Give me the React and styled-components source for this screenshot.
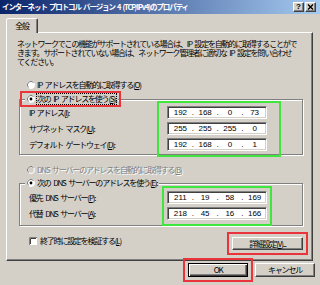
import React from 'react'
import styled, { createGlobalStyle } from 'styled-components'

const FACE = '#d4d0c8'
const RED = '#e8343a'
const GREEN = '#3ee63e'

const GlobalStyle = createGlobalStyle`
  html, body { margin: 0; padding: 0; background: ${FACE}; }
`

const Dialog = styled.div`
  width: 320px;
  height: 285px;
  overflow: hidden;
  background: ${FACE};
  display: flex;
  flex-direction: column;
  font-family: "Noto Sans CJK JP", "Noto Sans", sans-serif;
  font-size: 8px;
  line-height: 10px;
  letter-spacing: -1.2px;
  word-spacing: 2px;
  color: #000;
`

const TitleBar = styled.div`
  flex: none;
  height: 14px;
  display: flex;
  align-items: center;
  padding: 0 4px 0 2px;
  background: linear-gradient(to right, #0a246a, #a6caf0);
`

const Title = styled.div`
  flex: 1;
  color: #fff;
  font-weight: bold;
  font-size: 7.5px;
  letter-spacing: -1.1px;
  word-spacing: 1.5px;
  white-space: nowrap;
`

const CaptionButtons = styled.div`
  display: flex;
  gap: 1px;
`

const CaptionButton = styled.div`
  width: 11px;
  height: 10px;
  box-sizing: border-box;
  background: ${FACE};
  border: 1px solid;
  border-color: #fff #404040 #404040 #fff;
  box-shadow: inset -1px -1px 0 #808080;
  display: flex;
  align-items: center;
  justify-content: center;
  font-family: "Liberation Sans", Arial, sans-serif;
  font-weight: bold;
  font-size: 8px;
  line-height: 8px;
  letter-spacing: 0;
`

const Body = styled.div`
  flex: 1;
  display: flex;
  flex-direction: column;
  padding: 4px 7px 0 6px;
`

const TabStrip = styled.div`
  display: flex;
  height: 15px;
  margin-bottom: -1px;
  position: relative;
  z-index: 1;
`

const Tab = styled.div`
  width: 32px;
  height: 15px;
  box-sizing: border-box;
  background: ${FACE};
  border: 1px solid;
  border-bottom: none;
  border-color: #fff #404040 transparent #fff;
  border-radius: 2px 2px 0 0;
  box-shadow: inset -1px 0 0 #808080;
  display: flex;
  align-items: center;
  justify-content: center;
`

const Panel = styled.div`
  height: 229px;
  box-sizing: border-box;
  border: 1px solid;
  border-color: #fff #404040 #404040 #fff;
  box-shadow: inset -1px -1px 0 #808080;
  display: flex;
  flex-direction: column;
`

const Description = styled.p`
  margin: 5.5px 0 0 10px;
  line-height: 9px;
  white-space: nowrap;
`

const OptionRow = styled.div`
  display: flex;
  align-items: center;
  gap: 2px;
  height: 10px;
  margin: ${p => p.$mt}px 0 0 20px;
  white-space: nowrap;
  color: ${p => (p.$disabled ? '#808080' : '#000')};
  text-shadow: ${p => (p.$disabled ? '1px 1px 0 #fff' : 'none')};
`

const Group = styled.div`
  margin: ${p => p.$mt}px 0 0 12px;
  width: 284px;
  box-sizing: border-box;
  border: 1px solid #808080;
  box-shadow: 1px 1px 0 #fff, inset 1px 1px 0 #fff;
  padding-bottom: ${p => p.$pb}px;
  display: flex;
  flex-direction: column;
  align-items: flex-start;
`

const Legend = styled.div`
  position: relative;
  display: flex;
  align-items: center;
  gap: 2px;
  height: 10px;
  margin: -6px 0 0 5px;
  padding: 0 2px;
  background: ${FACE};
  white-space: nowrap;
  ${p => p.$marked && `
    &::after {
      content: '';
      position: absolute;
      left: -5px;
      right: -3px;
      top: -3px;
      bottom: -3px;
      border: 2px solid ${RED};
    }
  `}
`

const Focused = styled.span`
  outline: 1px dotted #000;
`

const Fields = styled.div`
  display: flex;
  margin-top: ${p => p.$mt}px;
  padding-left: 9px;
`

const LabelCol = styled.div`
  width: 138px;
  display: flex;
  flex-direction: column;
  gap: 3px;
`

const Label = styled.div`
  height: 13px;
  display: flex;
  align-items: center;
  white-space: pre;
`

const InputCol = styled.div`
  position: relative;
  display: flex;
  flex-direction: column;
  gap: 3px;
  &::after {
    content: '';
    position: absolute;
    top: ${p => -p.$box[0]}px;
    right: ${p => -p.$box[1]}px;
    bottom: ${p => -p.$box[2]}px;
    left: ${p => -p.$box[3]}px;
    border: 2px solid ${GREEN};
  }
`

const IpBox = styled.div`
  width: 100px;
  height: 13px;
  box-sizing: border-box;
  padding: 1px 0 0 1px;
  background: #fff;
  border: 1px solid;
  border-color: #808080 #fff #fff #808080;
  box-shadow: inset 1px 1px 0 #404040, inset -1px -1px 0 ${FACE};
  display: grid;
  grid-template-columns: 1fr auto 1fr auto 1fr auto 1fr;
  align-items: center;
  font-family: "Liberation Sans", Arial, sans-serif;
  font-size: 8px;
  line-height: 10px;
  letter-spacing: 0;
  word-spacing: 0;
`

const Octet = styled.span`
  text-align: center;
`

const Dot = styled.span`
  width: 2px;
  text-align: center;
`

const BottomRow = styled.div`
  display: flex;
  justify-content: space-between;
  align-items: flex-start;
  margin: 11px 9px 0 22px;
`

const CheckRow = styled.div`
  display: flex;
  align-items: center;
  gap: 3px;
  height: 10px;
  margin-top: -1px;
  white-space: nowrap;
`

const Button = styled.button`
  width: ${p => p.$w}px;
  height: ${p => p.$h}px;
  box-sizing: border-box;
  padding: 0;
  background: ${FACE};
  border: 1px solid;
  border-color: ${p => (p.$default ? '#000' : '#fff #404040 #404040 #fff')};
  box-shadow: ${p => (p.$default
    ? 'inset 1px 1px 0 #fff, inset -1px -1px 0 #404040, inset -2px -2px 0 #808080'
    : 'inset -1px -1px 0 #808080')};
  font: inherit;
  letter-spacing: inherit;
  color: #000;
  white-space: nowrap;
  ${p => p.$marked && `outline: 2px solid ${RED}; outline-offset: 3px;`}
`

const Footer = styled.div`
  display: flex;
  justify-content: flex-end;
  gap: 7px;
  margin: 2px -2px 0 0;
`

const Radio = ({ checked, disabled }) => (
  <svg width="8" height="8" viewBox="0 0 8 8" style={{ flex: 'none' }}>
    <circle cx="4" cy="4" r="3.5" fill={disabled ? FACE : '#fff'} stroke="#fff" />
    <path d="M1.5 6.5 A3.5 3.5 0 0 1 6.5 1.5" fill="none" stroke="#808080" />
    {checked && <circle cx="4" cy="4" r="1.4" fill={disabled ? '#808080' : '#000'} />}
  </svg>
)

const Checkbox = () => (
  <svg width="8" height="8" viewBox="0 0 8 8" style={{ flex: 'none' }}>
    <rect x="0" y="0" width="8" height="8" fill="#fff" />
    <path d="M0.5 8 V0.5 H8" fill="none" stroke="#808080" />
    <path d="M1.5 7 V1.5 H7" fill="none" stroke="#404040" />
  </svg>
)

const CloseGlyph = () => (
  <svg width="7" height="6" viewBox="0 0 7 6">
    <path d="M1 0.5 L6 5.5 M6 0.5 L1 5.5" stroke="#000" strokeWidth="1.4" />
  </svg>
)

const IpField = ({ value }) => {
  const parts = value.split('.')
  return (
    <IpBox>
      {parts.map((p, i) => (
        <React.Fragment key={i}>
          {i > 0 && <Dot>.</Dot>}
          <Octet>{p}</Octet>
        </React.Fragment>
      ))}
    </IpBox>
  )
}

const ipRows = [
  ['IP アドレス(', 'I', '):', '192.168.0.73'],
  ['サブネット マスク(', 'U', '):', '255.255.255.0'],
  ['デフォルト ゲートウェイ(', 'D', '):', '192.168.0.1'],
]

const dnsRows = [
  ['優先 DNS サーバー(', 'P', '):', '211.19.58.169'],
  ['代替 DNS サーバー(', 'A', '):', '218.45.16.166'],
]

const FieldSet = ({ rows, mt, box }) => (
  <Fields $mt={mt}>
    <LabelCol>
      {rows.map(r => (
        <Label key={r[1]}>{r[0]}<u>{r[1]}</u>{r[2]}</Label>
      ))}
    </LabelCol>
    <InputCol $box={box}>
      {rows.map(r => <IpField key={r[1]} value={r[3]} />)}
    </InputCol>
  </Fields>
)

export default function App() {
  return (
    <>
      <GlobalStyle />
      <Dialog>
        <TitleBar>
          <Title>インターネット プロトコル バージョン 4 (TCP/IPv4)のプロパティ</Title>
          <CaptionButtons>
            <CaptionButton>?</CaptionButton>
            <CaptionButton><CloseGlyph /></CaptionButton>
          </CaptionButtons>
        </TitleBar>
        <Body>
          <TabStrip>
            <Tab>全般</Tab>
          </TabStrip>
          <Panel>
            <Description>
              ネットワークでこの機能がサポートされている場合は、IP 設定を自動的に取得することがで<br />
              きます。サポートされていない場合は、ネットワーク管理者に適切な IP 設定を問い合わせ<br />
              てください。
            </Description>

            <OptionRow $mt={14.5}>
              <Radio />
              <span>IP アドレスを自動的に取得する(<u>O</u>)</span>
            </OptionRow>
            <Group $mt={9} $pb={3}>
              <Legend $marked>
                <Radio checked />
                <Focused>次の IP アドレスを使う(<u>S</u>):</Focused>
              </Legend>
              <FieldSet rows={ipRows} mt={2} box={[5, 14, 6, 10]} />
            </Group>

            <OptionRow $mt={10} $disabled>
              <Radio disabled />
              <span>DNS サーバーのアドレスを自動的に取得する(<u>B</u>)</span>
            </OptionRow>
            <Group $mt={8} $pb={5}>
              <Legend>
                <Radio checked />
                <span>次の DNS サーバーのアドレスを使う(<u>E</u>):</span>
              </Legend>
              <FieldSet rows={dnsRows} mt={3} box={[5, 5, 6, 5]} />
            </Group>

            <BottomRow>
              <CheckRow>
                <Checkbox />
                <span>終了時に設定を検証する(<u>L</u>)</span>
              </CheckRow>
              <Button $w={71} $h={13} $marked>詳細設定(<u>V</u>)...</Button>
            </BottomRow>
          </Panel>
          <Footer>
            <Button $w={60} $h={14} $default $marked>OK</Button>
            <Button $w={60} $h={14}>キャンセル</Button>
          </Footer>
        </Body>
      </Dialog>
    </>
  )
}
